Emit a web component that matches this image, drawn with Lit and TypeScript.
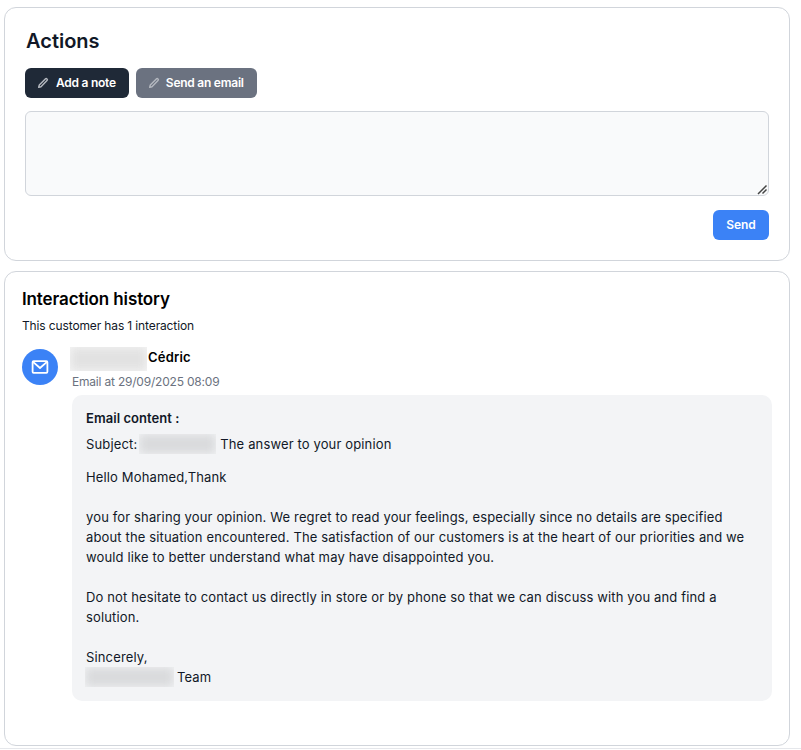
import { LitElement, html, css } from "lit";
import { customElement } from "lit/decorators.js";

const pencil = html`<svg class="pen" viewBox="0 0 12 12" width="12" height="12" fill="none" stroke="currentColor" stroke-width="1.4" stroke-linejoin="round"><path d="M8.3 1.9a1.2 1.2 0 0 1 1.7 1.7L4 9.7 1.7 10.3 2.3 8Z"/></svg>`;

@customElement("app-root")
export class AppRoot extends LitElement {
  static styles = css`
    :host { display: block; font-family: Inter, sans-serif; color: #111827; background: #fff; height: 750px; overflow: hidden; }
    .page { padding: 7px 11px 0 4px; display: flex; flex-direction: column; gap: 10px; }
    .card { border: 1px solid #d1d5db; border-radius: 12px; background: #fff; }
    .actions { height: 254px; box-sizing: border-box; padding: 20px; display: flex; flex-direction: column; }
    h2 { margin: 0 0 0 1px; font-size: 20px; line-height: 26px; font-weight: 600; color: #111827; }
    .tabs { display: flex; gap: 7px; margin-top: 14px; }
    .tab { display: flex; align-items: center; gap: 7px; height: 30px; padding: 0 13px 0 12px; border-radius: 6px; color: #fff; font-size: 12px; font-weight: 600; line-height: 30px; letter-spacing: -0.25px; }
    .tab.dark { background: #1f2937; }
    .tab.grey { background: #6b7280; gap: 6px; }
    .pen { color: #b4b8bf; flex: none; }
    .area { position: relative; margin-top: 13px; height: 85px; box-sizing: border-box; background: #f9fafb; border: 1px solid #d1d5db; border-radius: 6px; }
    .grip { position: absolute; right: 0; bottom: 0; }
    .foot { display: flex; justify-content: flex-end; margin-top: 14px; }
    .send { width: 56px; height: 30px; border-radius: 6px; background: #3b82f6; color: #fff; font-size: 12px; font-weight: 600; line-height: 30px; text-align: center; }
    .history { height: 475px; box-sizing: border-box; padding: 16px 17px 0 17px; color: #000; }
    h3 { margin: 0; font-size: 17px; line-height: 22px; font-weight: 600; color: #000; letter-spacing: -0.12px; }
    .count { font-size: 12px; line-height: 16px; margin-top: 8px; color: #111827; letter-spacing: -0.13px; }
    .item { display: flex; gap: 14px; margin-top: 13px; }
    .avatar { width: 36px; height: 36px; border-radius: 50%; background: #3b82f6; display: flex; align-items: center; justify-content: center; flex: none; margin-top: 2px; }
    .body { flex: 1; min-width: 0; }
    .who { display: flex; align-items: flex-start; height: 24px; font-size: 13px; line-height: 20px; font-weight: 600; color: #000; margin-left: -2px; letter-spacing: 0.2px; }
    .when { font-size: 12px; line-height: 16px; color: #6b7280; margin-top: 3px; letter-spacing: -0.2px; }
    .mail { margin-top: 5px; background: #f3f4f6; border-radius: 10px; padding: 13px 16px 13px 14px; height: 306px; box-sizing: border-box; font-size: 13px; line-height: 20px; color: #111827; letter-spacing: 0.14px; }
    .mail-title { font-weight: 600; line-height: 20px; font-size: 13px; letter-spacing: 0.05px; }
    .subject { display: flex; align-items: center; margin-top: 6px; height: 20px; }
    .text { margin: 13px 0 0; white-space: pre-line; }
    .blur { display: inline-block; overflow: hidden; background: #f3f4f6; flex: none; vertical-align: middle; }
    .blur i { display: block; width: 100%; height: 100%; background: #d9dadc; filter: blur(5px); }
    .who .blur { background: #f7f7f7; width: 77px; height: 24px; margin-right: 1px; }
    .who .blur i { background: #e2e2e2; }
    .sub-blur { width: 77px; height: 20px; margin: 0 4px 0 2px; }
    .team-blur { width: 89px; height: 20px; margin: 0 3px 0 -1px; }
    .sign { display: flex; align-items: center; height: 20px; }
    .edge { height: 1px; background: #e5e7eb; margin-top: 2px; }
  `;

  render() {
    return html`
      <div class="page">
        <section class="card actions">
          <h2>Actions</h2>
          <div class="tabs">
            <div class="tab dark">${pencil}Add a note</div>
            <div class="tab grey">${pencil}Send an email</div>
          </div>
          <div class="area">
            <svg class="grip" width="12" height="12" viewBox="0 0 12 12" fill="none" stroke="#444" stroke-width="1.5"><path d="M2 11 10.5 2.5M6.5 10.5 10.5 6.5"/></svg>
          </div>
          <div class="foot"><div class="send">Send</div></div>
        </section>
        <section class="card history">
          <h3>Interaction history</h3>
          <div class="count">This customer has 1 interaction</div>
          <div class="item">
            <div class="avatar">
              <svg width="18" height="18" viewBox="0 0 18 18" fill="none" stroke="#fff" stroke-width="1.8" stroke-linejoin="round"><rect x="1.6" y="3.2" width="14.8" height="11.6" rx="1"/><path d="M2 3.8 9 10l7-6.2"/></svg>
            </div>
            <div class="body">
              <div class="who"><span class="blur"><i></i></span>Cédric</div>
              <div class="when">Email at 29/09/2025 08:09</div>
              <div class="mail">
                <div class="mail-title">Email content :</div>
                <div class="subject">Subject:<span class="blur sub-blur"><i></i></span>The answer to your opinion</div>
                <p class="text">Hello Mohamed,Thank

you for sharing your opinion. We regret to read your feelings, especially since no details are specified about the situation encountered. The satisfaction of our customers is at the heart of our priorities and we would like to better understand what may have disappointed you.

Do not hesitate to contact us directly in store or by phone so that we can discuss with you and find a solution.

Sincerely,</p>
                <div class="sign"><span class="blur team-blur"><i></i></span>Team</div>
              </div>
            </div>
          </div>
        </section>
      </div>
      <div class="edge"></div>
    `;
  }
}
